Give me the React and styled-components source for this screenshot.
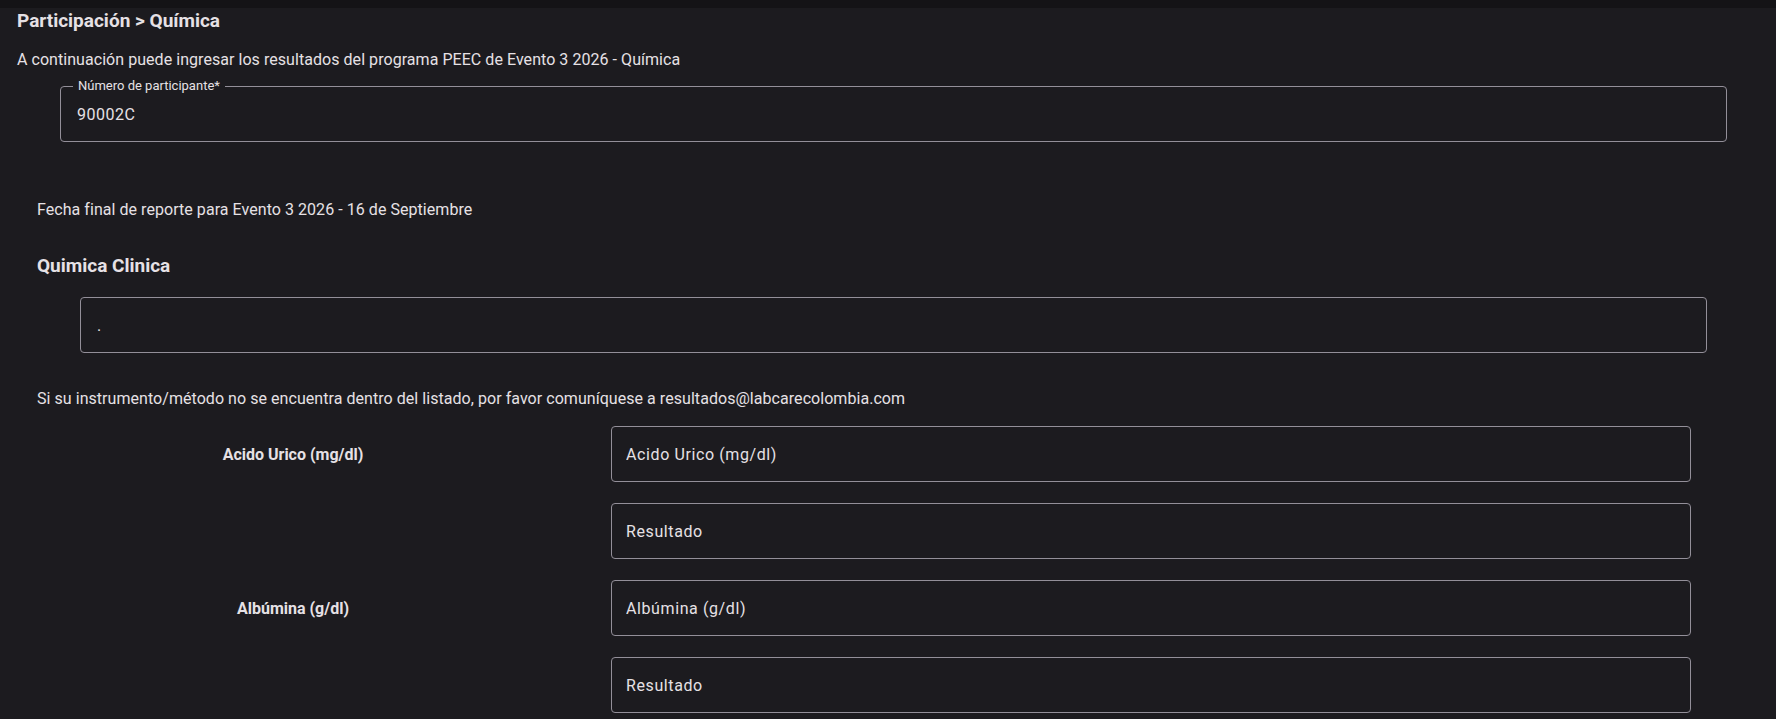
import React from "react"
import styled, { createGlobalStyle } from "styled-components"

const analytes = [
  { name: "Acido Urico (mg/dl)" },
  { name: "Albúmina (g/dl)" },
]

function App() {
  return (
    <>
      <GlobalStyle />
      <TopBar />
      <Page>
        <Title>Participación &gt; Química</Title>
        <Intro>
          A continuación puede ingresar los resultados del programa PEEC de Evento 3 2026 - Química
        </Intro>
        <ParticipantField>
          <FloatingLabel>Número de participante*</FloatingLabel>
          <FieldInput defaultValue="90002C" />
        </ParticipantField>

        <Section>
          <Deadline>Fecha final de reporte para Evento 3 2026 - 16 de Septiembre</Deadline>
          <SectionTitle>Quimica Clinica</SectionTitle>
          <SelectBox>.</SelectBox>
          <Notice>
            Si su instrumento/método no se encuentra dentro del listado, por favor comuníquese a
            resultados@labcarecolombia.com
          </Notice>

          <Results>
            {analytes.map((a) => (
              <React.Fragment key={a.name}>
                <AnalyteName>{a.name}</AnalyteName>
                <ResultInput placeholder={a.name} />
                <span />
                <ResultInput placeholder="Resultado" />
              </React.Fragment>
            ))}
          </Results>
        </Section>
      </Page>
    </>
  )
}

export default App

const GlobalStyle = createGlobalStyle`
  body {
    margin: 0;
    background: #1c1b1f;
    color: #e6e1e5;
    font-family: Roboto, "Liberation Sans", sans-serif;
    overflow: hidden;
  }
`
const TopBar = styled.div`
  height: 8px;
  background: #141316;
`
const Page = styled.div`
  padding: 1px 17px 0;
`
const Title = styled.h1`
  margin: 0;
  font-size: 19px;
  line-height: 24px;
  font-weight: 700;
`
const Text = styled.p`
  margin: 0;
  font-size: 16px;
  line-height: 24px;
  letter-spacing: 0.05px;
`
const Intro = styled(Text)`
  margin-top: 15px;
`
const ParticipantField = styled.div`
  position: relative;
  margin: 14px 32px 0 43px;
  height: 56px;
  border: 1px solid #938f99;
  border-radius: 4px;
  box-sizing: border-box;
`
const FloatingLabel = styled.span`
  position: absolute;
  top: -8px;
  left: 12px;
  padding: 0 5px;
  background: #1c1b1f;
  font-size: 13px;
  line-height: 14px;
  color: #e6e1e5;
`
const FieldInput = styled.input`
  width: 100%;
  height: 100%;
  box-sizing: border-box;
  padding: 0 16px;
  background: transparent;
  border: none;
  outline: none;
  color: #e6e1e5;
  font-family: Roboto, "Liberation Sans", sans-serif;
  font-size: 16px;
  letter-spacing: 0.5px;
`
const Section = styled.div`
  padding-left: 20px;
`
const Deadline = styled(Text)`
  margin-top: 56px;
`
const SectionTitle = styled.h2`
  margin: 30px 0 0;
  font-size: 19px;
  line-height: 28px;
  font-weight: 700;
`
const SelectBox = styled.div`
  display: flex;
  align-items: center;
  margin: 17px 52px 0 43px;
  height: 56px;
  padding: 0 16px;
  box-sizing: border-box;
  border: 1px solid #938f99;
  border-radius: 4px;
  font-size: 16px;
`
const Notice = styled(Text)`
  margin-top: 34px;
`
const Results = styled.div`
  display: grid;
  grid-template-columns: 512px 1fr;
  column-gap: 62px;
  row-gap: 21px;
  margin-top: 15px;
  padding-right: 68px;
`
const AnalyteName = styled.div`
  display: flex;
  align-items: center;
  justify-content: center;
  font-size: 16px;
  font-weight: 700;
`
const ResultInput = styled.input`
  height: 56px;
  box-sizing: border-box;
  padding: 0 14px;
  background: transparent;
  border: 1px solid #938f99;
  border-radius: 4px;
  outline: none;
  color: #e6e1e5;
  font-family: Roboto, "Liberation Sans", sans-serif;
  font-size: 16px;
  letter-spacing: 0.6px;

  &::placeholder {
    color: #e6e1e5;
    opacity: 1;
  }
`
